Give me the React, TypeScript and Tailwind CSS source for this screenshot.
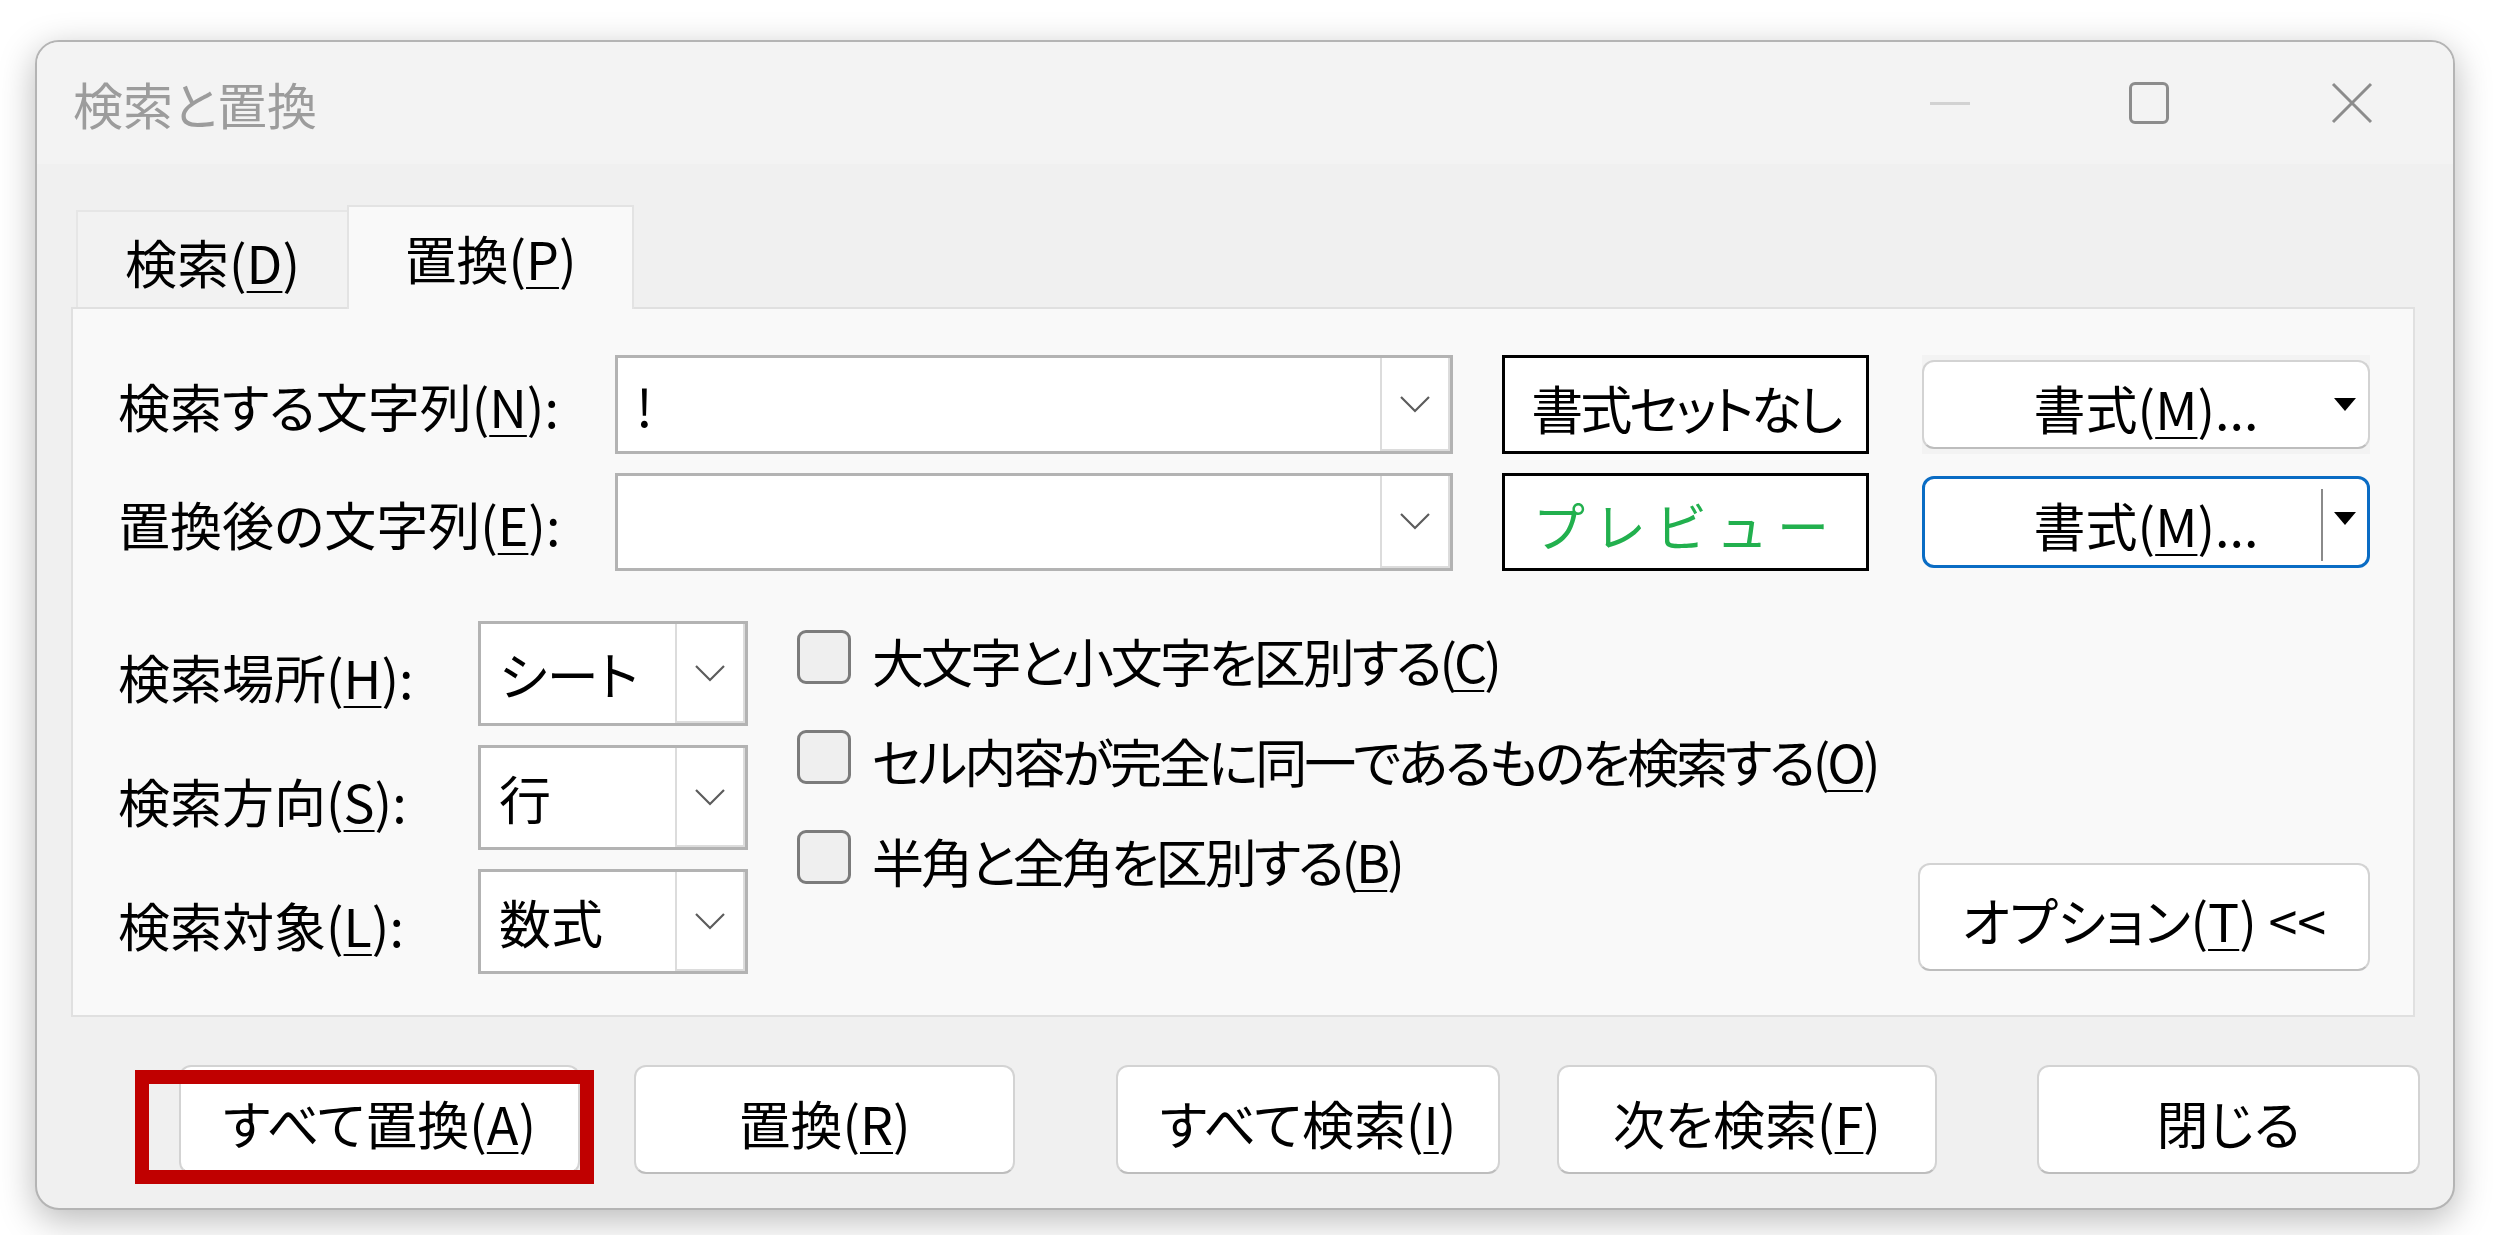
import React from "react";

// Access-key letter, drawn underlined like a Win32 mnemonic
function Key({ children }: { children: React.ReactNode }) {
  return <span className="underline decoration-2 underline-offset-[7px]">{children}</span>;
}

function Chevron() {
  return (
    <svg width="32" height="18" viewBox="0 0 32 18" fill="none">
      <path d="M2 2 L16 16 L30 2" stroke="#5c5c5c" strokeWidth="2.2" />
    </svg>
  );
}

function DropField({ value, className }: { value?: string; className: string }) {
  return (
    <div className={`flex items-stretch border-[3px] border-[#b3b3b3] bg-white ${className}`}>
      <div className="flex flex-1 items-center pl-[18px]">{value}</div>
      <div className="flex w-[70px] items-center justify-center border-x-2 border-b-2 border-[#dcdcdc]">
        <Chevron />
      </div>
    </div>
  );
}

function Caret() {
  return (
    <svg width="22" height="13" viewBox="0 0 22 13">
      <path d="M0 0 H22 L11 13 Z" fill="#000" />
    </svg>
  );
}

function Checkbox({ children }: { children: React.ReactNode }) {
  return (
    <div className="flex h-[54px] items-center">
      <div className="h-[54px] w-[54px] shrink-0 rounded-[9px] border-[3px] border-[#7b7b7b] bg-[#efefef]" />
      <span className="ml-[21px] whitespace-nowrap pt-[8px] tracking-[-3px]">{children}</span>
    </div>
  );
}

const btn =
  "flex h-[109px] shrink-0 items-center justify-center rounded-[12px] border-2 border-[#d3d3d3] border-b-[#bdbdbd] bg-white whitespace-nowrap";

export default function App() {
  const combos = [
    { label: <>検索場所(<Key>H</Key>):</>, value: "シート" },
    { label: <>検索方向(<Key>S</Key>):</>, value: "行" },
    { label: <>検索対象(<Key>L</Key>):</>, value: "数式" },
  ];

  return (
    <div className="h-[1235px] w-[2506px] overflow-hidden bg-white pl-[35px] pt-[40px] font-['Noto_Sans_CJK_JP',sans-serif] text-[52px] leading-none text-black [font-feature-settings:'palt']">
      <div className="relative flex h-[1170px] w-[2420px] flex-col rounded-[24px] border-2 border-[#b4b4b4] bg-[#f0f0f0] shadow-[0_10px_36px_rgba(0,0,0,0.28)]">
        {/* title bar */}
        <div className="flex h-[122px] items-center rounded-t-[22px] bg-[#f3f3f3] pl-[36px] pr-[80px]">
          <span className="text-[50px] text-[#9c9c9c]">検索と置換</span>
          <div className="ml-auto flex items-center">
            <div className="h-[3px] w-[40px] bg-[#d2d2d2]" />
            <div className="ml-[159px] h-[42px] w-[40px] rounded-[6px] border-[3px] border-[#8c8c8c]" />
            <svg className="ml-[162px]" width="42" height="42" viewBox="0 0 42 42">
              <path d="M2 2 L40 40 M40 2 L2 40" stroke="#8c8c8c" strokeWidth="3" />
            </svg>
          </div>
        </div>

        <div className="ml-[34px] mr-[38px] mt-[41px] flex flex-col">
          {/* tabs */}
          <div className="ml-[5px] flex items-end">
            <div className="flex h-[97px] w-[271px] items-center justify-center border-l-2 border-t-2 border-[#e6e6e6] bg-[#f2f2f2] pt-[4px]">
              検索(<Key>D</Key>)
            </div>
            <div className="relative z-10 -mb-[2px] flex h-[104px] w-[287px] items-center justify-center border-x-2 border-t-2 border-[#e3e3e3] bg-[#f9f9f9]">
              置換(<Key>P</Key>)
            </div>
          </div>

          {/* tab page */}
          <div className="flex flex-col border-2 border-[#e0e0e0] bg-[#f9f9f9] pb-[41px] pl-[45px] pr-[43px] pt-[46px]">
            <div className="flex h-[99px] items-center">
              <div className="w-[497px] pt-[3px]">検索する文字列(<Key>N</Key>):</div>
              <DropField className="h-[99px] w-[838px]" value="!" />
              <div className="ml-[49px] flex h-[99px] w-[367px] items-center justify-center border-[3px] border-black bg-white pt-[6px] tracking-[-3px]">
                書式セットなし
              </div>
              <div className="ml-[53px] flex h-[99px] w-[448px] items-center bg-[#f3f3f3]">
                <div className={`${btn} relative !h-[89px] w-[448px] pt-[6px]`}>
                  書式(<Key>M</Key>)...
                  <div className="absolute right-[12px] top-[36px]">
                    <Caret />
                  </div>
                </div>
              </div>
            </div>

            <div className="mt-[19px] flex h-[98px] items-center">
              <div className="w-[497px] pt-[3px]">置換後の文字列(<Key>E</Key>):</div>
              <DropField className="h-[98px] w-[838px]" />
              <div className="ml-[49px] flex h-[98px] w-[367px] items-center justify-center border-[3px] border-black bg-white pt-[6px] tracking-[9px] text-[#22b04e] [font-feature-settings:normal]">
                プレビュー
              </div>
              <div className="relative ml-[53px] flex h-[92px] w-[448px] items-center justify-center rounded-[12px] border-[3px] border-[#0a6cc4] bg-white pt-[6px]">
                書式(<Key>M</Key>)...
                <div className="absolute right-[44px] top-[10px] h-[72px] w-[2px] bg-[#8a8a8a]" />
                <div className="absolute right-[11px] top-[33px]">
                  <Caret />
                </div>
              </div>
            </div>

            <div className="mt-[50px] flex">
              <div className="flex shrink-0 flex-col gap-[19px]">
                {combos.map((c, i) => (
                  <div key={i} className="flex h-[105px] items-center">
                    <div className="w-[360px] pt-[6px]">{c.label}</div>
                    <DropField className="h-[105px] w-[270px]" value={c.value} />
                  </div>
                ))}
              </div>

              <div className="ml-[49px] mt-[9px] flex flex-col gap-[46px]">
                <Checkbox>大文字と小文字を区別する(<Key>C</Key>)</Checkbox>
                <Checkbox>セル内容が完全に同一であるものを検索する(<Key>O</Key>)</Checkbox>
                <Checkbox>半角と全角を区別する(<Key>B</Key>)</Checkbox>
              </div>

              <div className={`${btn} mb-[3px] ml-auto w-[452px] self-end !h-[108px] pt-[6px]`}>
                オプション(<Key>T</Key>)&nbsp;&lt;&lt;
              </div>
            </div>
          </div>
        </div>

        {/* dialog buttons */}
        <div className="ml-[142px] mt-[48px] flex">
          <div className={`${btn} w-[401px] pt-[6px]`}>すべて置換(<Key>A</Key>)</div>
          <div className={`${btn} ml-[54px] w-[381px] pt-[6px]`}>置換(<Key>R</Key>)</div>
          <div className={`${btn} ml-[101px] w-[384px] pt-[6px]`}>すべて検索(<Key>I</Key>)</div>
          <div className={`${btn} ml-[57px] w-[380px] pt-[6px]`}>次を検索(<Key>F</Key>)</div>
          <div className={`${btn} ml-[100px] w-[383px] pt-[6px]`}>閉じる</div>
        </div>

        {/* highlight around the replace-all button */}
        <div className="pointer-events-none absolute left-[98px] top-[1028px] h-[114px] w-[459px] border-[14px] border-[#c00000]" />
      </div>
    </div>
  );
}
